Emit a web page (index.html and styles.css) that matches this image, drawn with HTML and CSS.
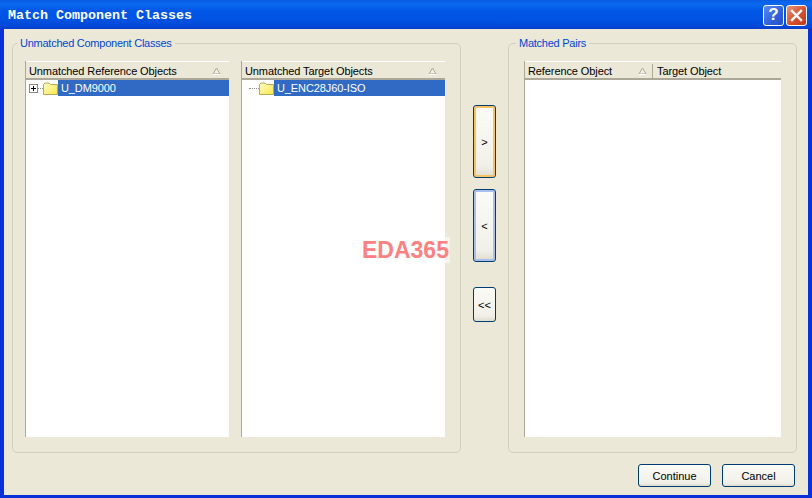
FILE: index.html
```html
<!DOCTYPE html>
<html lang="en">
<head>
    <meta charset="UTF-8">
    <title>Match Component Classes</title>
    <link rel="stylesheet" href="styles.css">
</head>
<body>
    <div class="window">
        <div class="titlebar">
            <span class="title">Match Component Classes</span>
            <div class="caption-btn help">?</div>
            <div class="caption-btn close">
                <svg width="13" height="13" viewBox="0 0 13 13"><path d="M2 2 L11 11 M11 2 L2 11" stroke="#fff" stroke-width="2.4" stroke-linecap="square"/></svg>
            </div>
        </div>
        <div class="client">
            <div class="main">
                <fieldset class="group group-left">
                    <legend>Unmatched Component Classes</legend>
                    <div class="list">
                        <div class="list-head">
                            <span class="col">Unmatched Reference Objects</span>
                            <svg class="sort" width="9" height="8" viewBox="0 0 9 8"><path d="M4.5 1 L8 7 H1 Z" fill="#f4f2e8" stroke="#aca899"/><path d="M1 7.5 H8" stroke="#fff"/></svg>
                        </div>
                        <div class="tree-row">
                            <span class="expander">
                                <svg width="9" height="9" viewBox="0 0 9 9"><rect x="0.5" y="0.5" width="8" height="8" fill="#fff" stroke="#8a8a80"/><path d="M2 4.5 H7 M4.5 2 V7" stroke="#000"/></svg>
                            </span>
                            <span class="dots short"></span>
                            <svg class="folder" width="15" height="13" viewBox="0 0 15 13"><defs><linearGradient id="fold" x1="0" y1="0" x2="1" y2="1"><stop offset="0" stop-color="#fffcc8"/><stop offset="1" stop-color="#f8e848"/></linearGradient></defs><path d="M0.5 12.5 V2.5 L2 1 H6 L7.5 2.5 H14.5 V12.5 Z" fill="url(#fold)" stroke="#b8a850"/></svg>
                            <span class="node">U_DM9000</span>
                        </div>
                    </div>
                    <div class="list">
                        <div class="list-head">
                            <span class="col">Unmatched Target Objects</span>
                            <svg class="sort" width="9" height="8" viewBox="0 0 9 8"><path d="M4.5 1 L8 7 H1 Z" fill="#f4f2e8" stroke="#aca899"/><path d="M1 7.5 H8" stroke="#fff"/></svg>
                        </div>
                        <div class="tree-row">
                            <span class="dots long"></span>
                            <svg class="folder" width="15" height="13" viewBox="0 0 15 13"><path d="M0.5 12.5 V2.5 L2 1 H6 L7.5 2.5 H14.5 V12.5 Z" fill="url(#fold)" stroke="#b8a850"/></svg>
                            <span class="node">U_ENC28J60-ISO</span>
                        </div>
                    </div>
                </fieldset>
                <div class="move-btns">
                    <button class="btn tall hot">&gt;</button>
                    <button class="btn tall focus">&lt;</button>
                    <button class="btn short-btn">&lt;&lt;</button>
                </div>
                <fieldset class="group group-right">
                    <legend>Matched Pairs</legend>
                    <div class="list pairs">
                        <div class="list-head">
                            <span class="col col-ref">Reference Object</span>
                            <svg class="sort" width="9" height="8" viewBox="0 0 9 8"><path d="M4.5 1 L8 7 H1 Z" fill="#f4f2e8" stroke="#aca899"/><path d="M1 7.5 H8" stroke="#fff"/></svg>
                            <span class="col col-target">Target Object</span>
                        </div>
                    </div>
                </fieldset>
            </div>
            <div class="footer">
                <button class="btn wide">Continue</button>
                <button class="btn wide">Cancel</button>
            </div>
        </div>
        <div class="watermark">EDA365</div>
    </div>
</body>
</html>
```

FILE: styles.css
```css
body {
    margin: 0;
    font-family: "Liberation Sans", Arial, sans-serif;
    font-size: 11px;
    letter-spacing: -0.1px;
    color: #000;
}

.window {
    position: relative;
    width: 812px;
    height: 498px;
    display: flex;
    flex-direction: column;
    overflow: hidden;
    background: #0831d9;
}

.titlebar {
    height: 29px;
    flex: none;
    display: flex;
    align-items: center;
    padding: 0 5px 0 8px;
    gap: 2px;
    background: linear-gradient(#0a5ce0 0, #0a6af0 4px, #0258e6 10px, #0152e2 20px, #0348d8 26px, #0a3bc8 29px);
}

.title {
    flex: 1;
    font-family: "Liberation Mono", monospace;
    font-weight: bold;
    font-size: 13.33px;
    letter-spacing: 0;
    color: #fff;
    margin-top: 1px;
}

.caption-btn {
    width: 19px;
    height: 19px;
    border: 1px solid #fff;
    border-radius: 3px;
    display: flex;
    align-items: center;
    justify-content: center;
    color: #fff;
    font-weight: bold;
    font-size: 17px;
    margin-top: 1px;
}

.help {
    background: linear-gradient(135deg, #5d8cf0, #2f5fdc 60%, #2450c8);
}

.close {
    background: linear-gradient(135deg, #e8957c, #d5512f 55%, #c03a1c);
}

.client {
    flex: 1;
    margin: 0 4px 4px;
    background: #ebe8d8;
    display: flex;
    flex-direction: column;
    padding: 8px 11px 8px 8px;
}

.main {
    display: flex;
    height: 416px;
    flex: none;
}

.group {
    margin: 0;
    padding: 11px 15px 15px 12px;
    border: 1px solid #d0d0bf;
    border-radius: 5px;
    display: flex;
    box-sizing: border-box;
    min-width: 0;
    flex: none;
}

.group legend {
    color: #0046d5;
    letter-spacing: -0.25px;
    padding: 0 3px;
    margin-left: -8px;
    line-height: 13px;
}

.group-left {
    width: 449px;
    gap: 12px;
}

.group-right {
    width: 289px;
    padding-left: 15px;
}

.list {
    width: 204px;
    background: #fff;
    border-left: 1px solid #aca899;
    box-sizing: border-box;
    display: flex;
    flex-direction: column;
}

.pairs {
    width: 257px;
}

.list-head {
    height: 19px;
    flex: none;
    background: #ebe8d8;
    border-top: 1px solid #fff;
    border-bottom: 2px solid #aca899;
    box-sizing: border-box;
    display: flex;
    align-items: center;
    padding: 2px 8px 0 3px;
}

.col {
    flex: 1;
}

.sort {
    flex: none;
}

.col-ref {
    flex: none;
    width: 110px;
}

.col-target {
    margin-left: 5px;
    padding-left: 4px;
    border-left: 1px solid #aca899;
    line-height: 14px;
}

.tree-row {
    height: 16px;
    display: flex;
    align-items: center;
    padding-left: 3px;
}

.expander {
    display: flex;
    width: 9px;
}

.dots {
    border-top: 1px dotted #8a8a80;
    height: 0;
}

.dots.short {
    width: 5px;
}

.dots.long {
    width: 10px;
    margin-left: 4px;
}

.folder {
    flex: none;
}

.node {
    flex: 1;
    background: #316ac5;
    color: #fff;
    height: 16px;
    line-height: 16px;
    padding-left: 3px;
}

.move-btns {
    width: 47px;
    flex: none;
    display: flex;
    flex-direction: column;
    align-items: flex-start;
    padding: 68px 0 0 12px;
    box-sizing: border-box;
}

.btn {
    font-family: "Liberation Sans", Arial, sans-serif;
    font-size: 11px;
    color: #000;
    padding: 0;
    border: 1px solid #003c74;
    border-radius: 3px;
    background: linear-gradient(#fbfbf7, #f1f0e8 85%, #dedccd);
}

.tall {
    width: 23px;
    height: 73px;
    margin-bottom: 11px;
}

.short-btn {
    width: 23px;
    height: 35px;
    margin-top: 14px;
}

.hot {
    box-shadow: inset 0 0 0 2px #f7c266;
}

.focus {
    box-shadow: inset 0 0 0 2px #a9c0ec;
}

.footer {
    display: flex;
    justify-content: flex-end;
    gap: 11px;
    margin-top: 11px;
    padding-right: 2px;
}

.wide {
    width: 73px;
    height: 23px;
}

.watermark {
    position: absolute;
    left: 362px;
    top: 237px;
    padding-right: 1px;
    font-weight: bold;
    font-size: 23px;
    letter-spacing: 0;
    line-height: 26px;
    color: #ff8080;
    background: rgba(255, 255, 255, 0.5);
}
```
